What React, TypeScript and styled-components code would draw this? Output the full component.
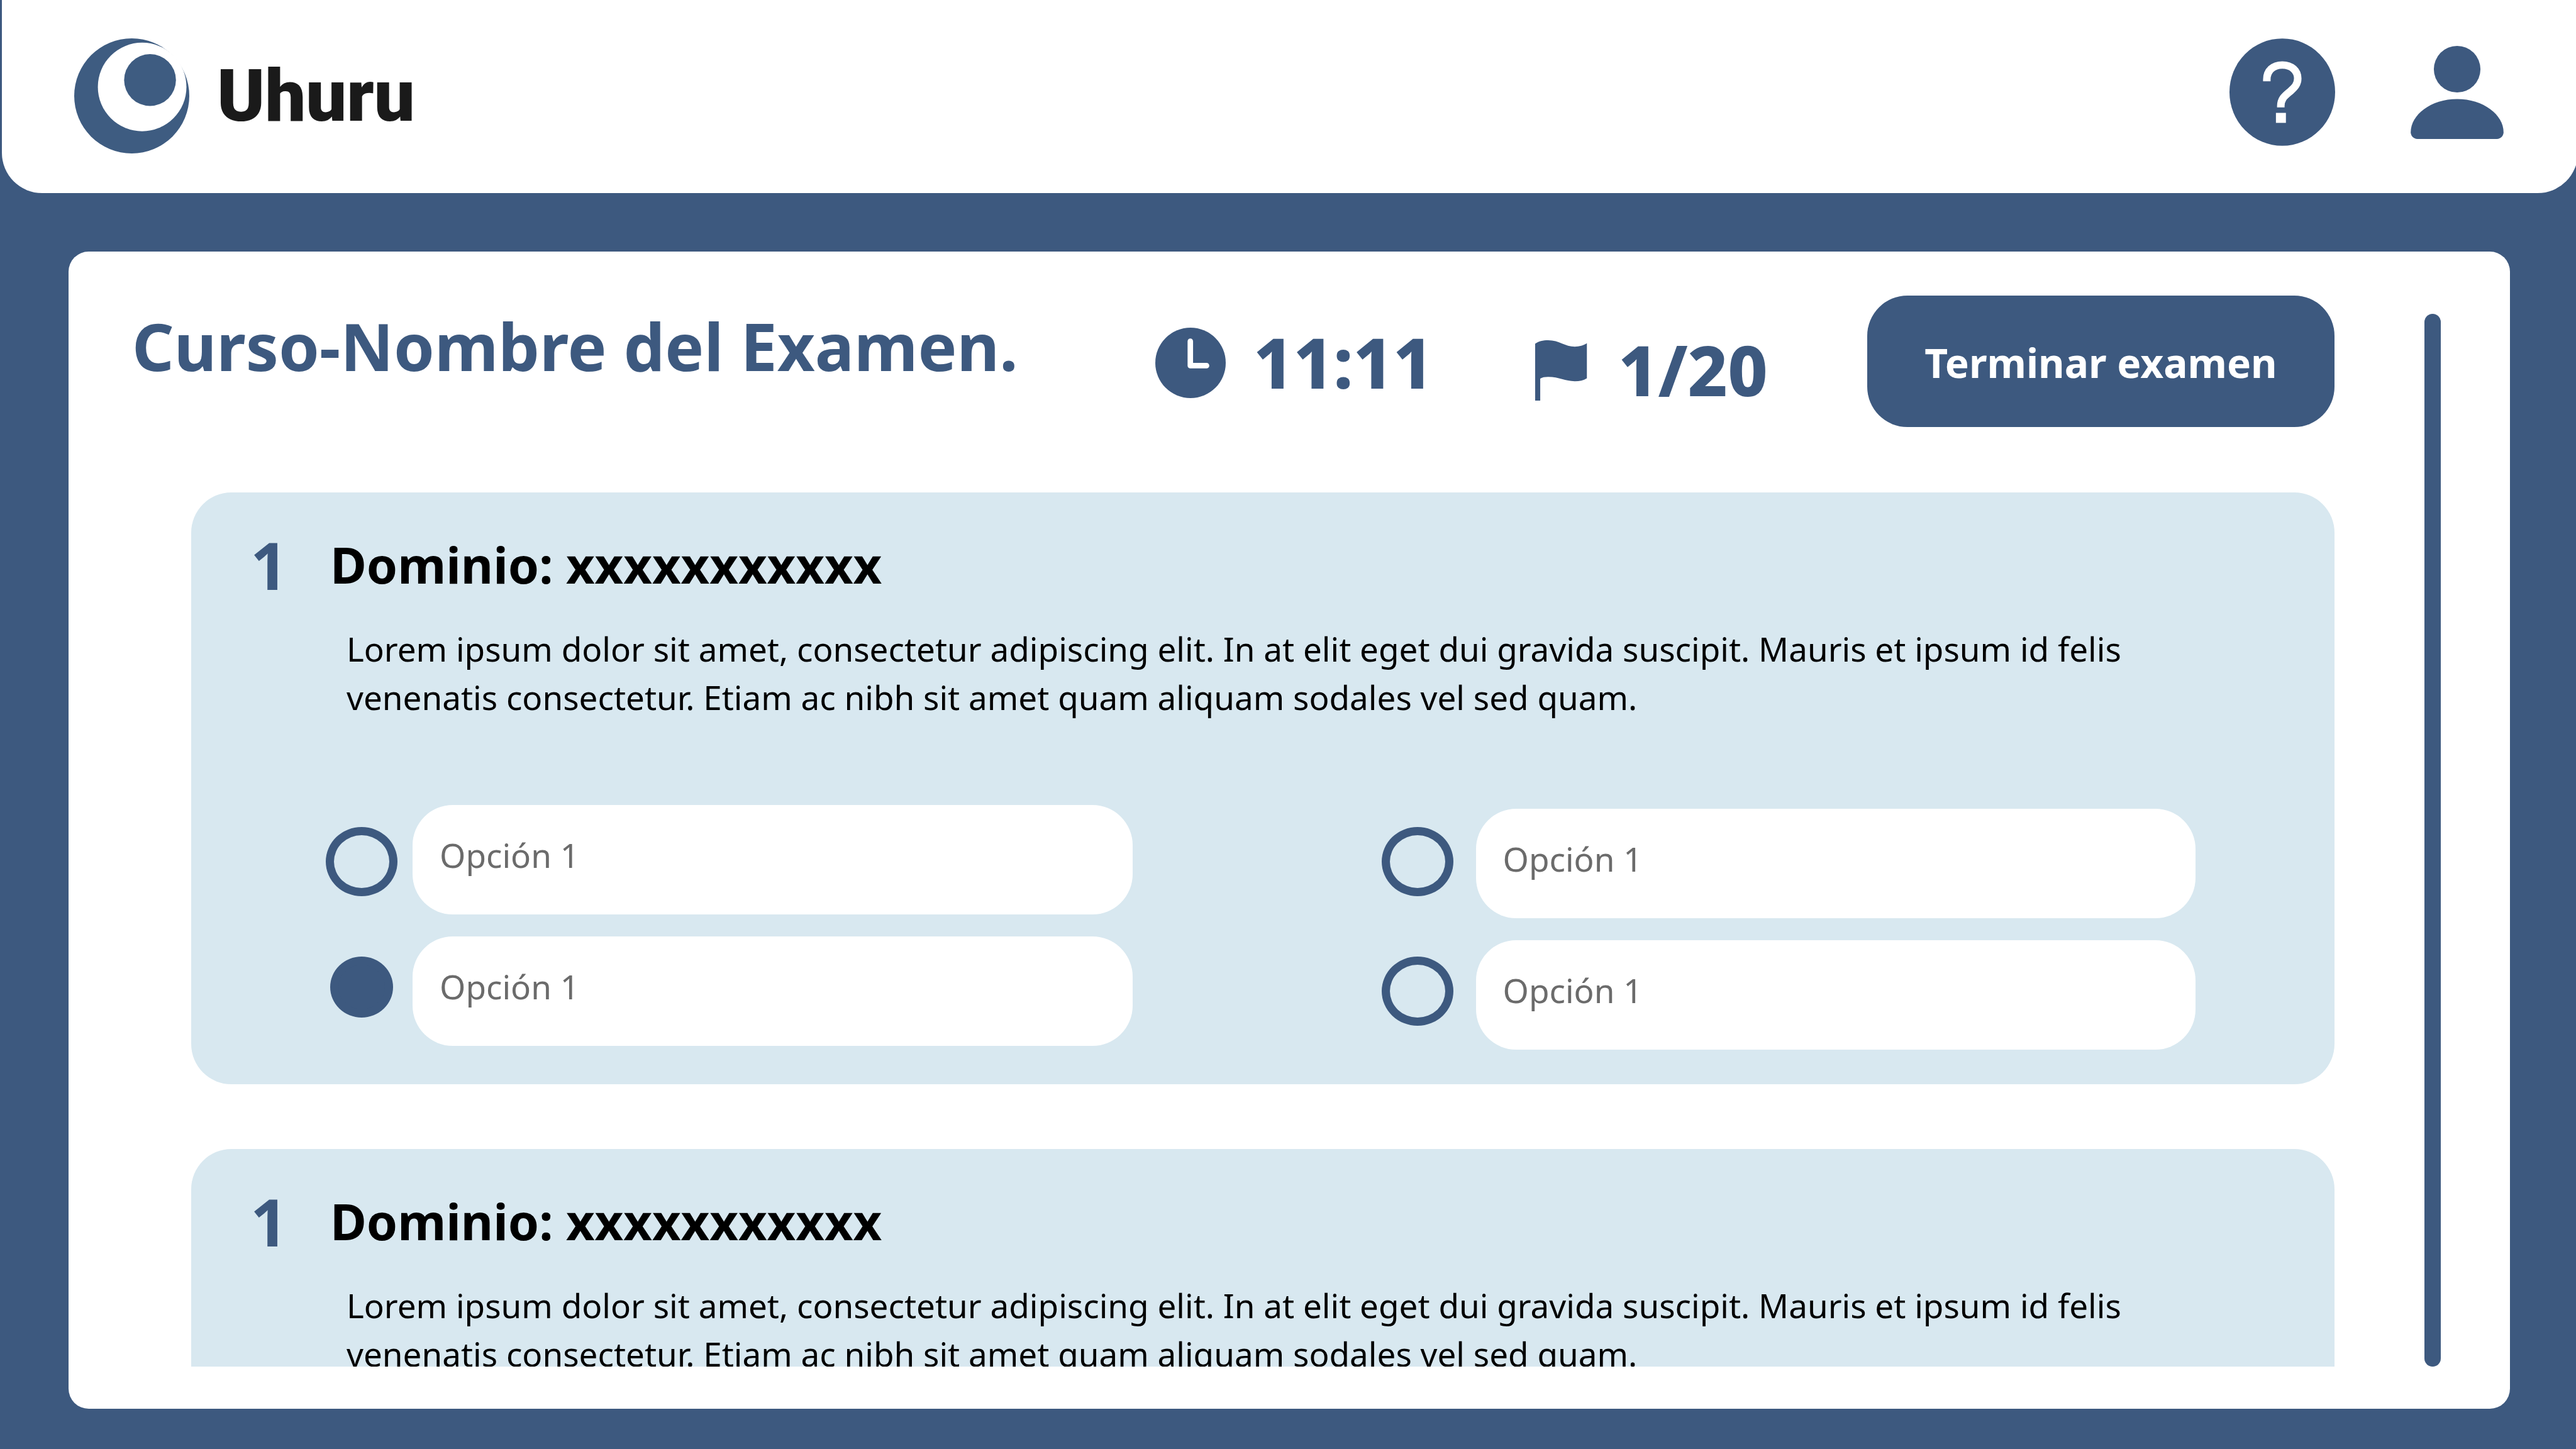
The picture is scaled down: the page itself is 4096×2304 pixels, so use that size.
import React from "react";
import styled, { createGlobalStyle } from "styled-components";

const BLUE = "#3d597f";
const LOGO_BLUE = "#3e5c81";
const PALE = "#d8e8f0";

const GlobalStyle = createGlobalStyle`
  *, *::before, *::after { box-sizing: border-box; }
  body {
    margin: 0;
    background: ${BLUE};
    color: #000;
    font-family: "Noto Sans", "Open Sans", sans-serif;
  }
  h1, h2, p { margin: 0; }
`;

const Page = styled.div`
  display: flex;
  flex-direction: column;
  height: 100vh;
  overflow: hidden;
  background: ${BLUE};
`;

const Header = styled.header`
  display: flex;
  justify-content: space-between;
  align-items: flex-start;
  flex: none;
  margin: 0 -3px 0 3px;
  padding: 61px 118px 63px 115px;
  background: #fff;
  border-radius: 0 0 64px 64px;
`;

const Brand = styled.a`
  display: flex;
  align-items: center;
  gap: 44px;
  color: #1a1a1a;
  font-family: Roboto, sans-serif;
  font-size: 115px;
  font-weight: 900;
  line-height: 183px;
  text-decoration: none;
`;

const HeaderActions = styled.nav`
  display: flex;
  align-items: center;
  gap: 120px;
`;

const IconButton = styled.button`
  display: flex;
  padding: 0;
  border: 0;
  background: none;
  cursor: pointer;
`;

const Icon = styled.svg<{ $color?: string }>`
  display: block;
  flex: none;
  fill: ${(p) => p.$color ?? BLUE};
`;

const Panel = styled.main`
  display: flex;
  flex: 1;
  gap: 143px;
  min-height: 0;
  margin: 93px 105px 64px 109px;
  padding: 70px 110px 67px 101px;
  background: #fff;
  border-radius: 32px;
`;

const Exam = styled.div`
  display: flex;
  flex: 1;
  flex-direction: column;
  gap: 104px;
  min-width: 0;
`;

const ExamBar = styled.div`
  display: grid;
  grid-template-columns: 1fr 604px 528px 743px;
  align-items: center;
`;

const Title = styled.h1`
  margin-bottom: 50px;
  color: ${BLUE};
  font-size: 104px;
  font-weight: 700;
  line-height: 104px;
  white-space: nowrap;
`;

const Stat = styled.div<{ $drop: number }>`
  display: flex;
  align-items: center;
  gap: 44px;
  margin-top: ${(p) => p.$drop}px;
`;

const StatValue = styled.span`
  padding-bottom: 4px;
  color: ${BLUE};
  font-size: 110px;
  font-weight: 800;
  line-height: 110px;
`;

const FinishButton = styled.button`
  height: 209px;
  padding: 4px 0 0;
  border: 0;
  border-radius: 64px;
  background: ${BLUE};
  color: #fff;
  font-family: inherit;
  font-size: 64px;
  font-weight: 700;
  white-space: nowrap;
  cursor: pointer;
`;

const QuestionList = styled.div`
  display: flex;
  flex: 1;
  flex-direction: column;
  gap: 103px;
  min-height: 0;
  margin-left: 94px;
  overflow-y: auto;
  scrollbar-width: none;
`;

const Card = styled.section`
  flex: none;
  padding: 63px 221px 55px 94px;
  border-radius: 64px;
  background: ${PALE};
`;

const CardHeading = styled.div`
  display: flex;
  align-items: center;
  line-height: 104px;
`;

const Number = styled.span`
  width: 127px;
  color: ${BLUE};
  font-size: 104px;
  font-weight: 700;
`;

const Domain = styled.h2`
  font-size: 79px;
  font-weight: 700;
`;

const Statement = styled.p`
  margin: 43px 0 133px 153px;
  font-size: 53px;
  line-height: 77px;
`;

const Answers = styled.div`
  display: flex;
  gap: 396px;
  margin-left: 120px;
`;

const AnswerColumn = styled.div<{ $gap: number }>`
  display: flex;
  flex: 1 1 auto;
  gap: ${(p) => p.$gap}px;
`;

const RadioStack = styled.div`
  display: flex;
  flex: none;
  flex-direction: column;
  align-items: center;
  gap: 96px;
  width: 114px;
  padding-top: 35px;
`;

const Radio = styled.input`
  appearance: none;
  width: 114px;
  height: 110px;
  margin: 0;
  border: 13px solid ${BLUE};
  border-radius: 50%;
  cursor: pointer;

  &:checked {
    width: 100px;
    height: 97px;
    background: ${BLUE};
  }
`;

const FieldStack = styled.div<{ $top: number }>`
  display: flex;
  flex: 1 1 auto;
  flex-direction: column;
  gap: 35px;
  padding-top: ${(p) => p.$top}px;
`;

const Field = styled.label`
  display: flex;
  align-items: center;
  height: 174px;
  padding: 0 43px 16px;
  border-radius: 64px;
  background: #fff;
  color: #6b6b6b;
  font-size: 53px;
  cursor: pointer;
`;

const ScrollBar = styled.div`
  flex: none;
  width: 26px;
  margin-top: 29px;
  border-radius: 13px;
  background: ${BLUE};
`;

function LogoIcon() {
  return (
    <Icon $color={LOGO_BLUE} width="183" height="183" viewBox="0 0 238 238" aria-hidden="true">
      <circle cx="119" cy="119" r="119" />
      <circle cx="140.5" cy="100.4" r="91.6" fill="#fff" />
      <circle cx="156.8" cy="86.2" r="53.6" />
    </Icon>
  );
}

function HelpIcon() {
  return (
    <Icon width="168" height="171" viewBox="0 0 219 222.4" aria-hidden="true">
      <ellipse cx="109.5" cy="111.2" rx="109.5" ry="111.2" />
      <path
        d="M77.4 88.8V85C77.4 67 90 55 109.5 55S141.5 67 141.5 83C141.5 95 135 101.5 127 108.5C115 119 106.4 124 106.4 140V142.7"
        fill="none"
        stroke="#fff"
        strokeWidth="15.6"
      />
      <rect x="96.3" y="154.2" width="20.7" height="20.7" fill="#fff" />
    </Icon>
  );
}

function UserIcon() {
  return (
    <Icon width="148" height="148" viewBox="0 0 192 192.5" aria-hidden="true">
      <circle cx="96" cy="48.2" r="48.2" />
      <path d="M0 178.6C0 142 42 109.8 96 109.8S192 142 192 178.6C192 186 186 192.5 178.2 192.5H13.8C6 192.5 0 186 0 178.6Z" />
    </Icon>
  );
}

function ClockIcon() {
  return (
    <Icon width="112" height="112" viewBox="0 0 146.4 146.4" aria-hidden="true">
      <circle cx="73.2" cy="73.2" r="73.2" />
      <path
        d="M72.8 28.3V79H106.5"
        fill="none"
        stroke="#fff"
        strokeWidth="11.4"
        strokeLinecap="round"
        strokeLinejoin="round"
      />
    </Icon>
  );
}

function FlagIcon() {
  return (
    <Icon width="88" height="96" viewBox="0 0 114.6 125" aria-hidden="true">
      <path d="M0 7.3C7 2 16 0 26.8 0C50 0 62 13.4 82 13.4C92 13.4 100 10.5 107.1 6.3V78.7C100 83 92 85 82 85C62 85 50 76 26.8 76C20 76 15 77 10.5 79.3V125H0Z" />
    </Icon>
  );
}

const STATEMENT =
  "Lorem ipsum dolor sit amet, consectetur adipiscing elit. In at elit eget dui gravida suscipit. Mauris et ipsum id felis venenatis consectetur. Etiam ac nibh sit amet quam aliquam sodales vel sed quam.";

const COLUMNS = [
  { side: "a", gap: 24, top: 0, options: ["Opción 1", "Opción 1"] },
  { side: "b", gap: 36, top: 6, options: ["Opción 1", "Opción 1"] },
];

function Question({ id }: { id: string }) {
  return (
    <Card>
      <CardHeading>
        <Number>1</Number>
        <Domain>Dominio: xxxxxxxxxxx</Domain>
      </CardHeading>
      <Statement>{STATEMENT}</Statement>
      <Answers>
        {COLUMNS.map((column) => (
          <AnswerColumn key={column.side} $gap={column.gap}>
            <RadioStack>
              {column.options.map((_, i) => (
                <Radio
                  key={i}
                  type="radio"
                  id={`${id}-${column.side}${i}`}
                  name={id}
                  defaultChecked={column.side === "a" && i === 1}
                />
              ))}
            </RadioStack>
            <FieldStack $top={column.top}>
              {column.options.map((option, i) => (
                <Field key={i} htmlFor={`${id}-${column.side}${i}`}>
                  {option}
                </Field>
              ))}
            </FieldStack>
          </AnswerColumn>
        ))}
      </Answers>
    </Card>
  );
}

export default function App() {
  return (
    <>
      <GlobalStyle />
      <Page>
        <Header>
          <Brand href="#">
            <LogoIcon />
            Uhuru
          </Brand>
          <HeaderActions>
            <IconButton type="button" aria-label="Ayuda">
              <HelpIcon />
            </IconButton>
            <IconButton type="button" aria-label="Perfil">
              <UserIcon />
            </IconButton>
          </HeaderActions>
        </Header>
        <Panel>
          <Exam>
            <ExamBar>
              <Title>Curso-Nombre del Examen.</Title>
              <Stat $drop={4}>
                <ClockIcon />
                <StatValue>11:11</StatValue>
              </Stat>
              <Stat $drop={28}>
                <FlagIcon />
                <StatValue>1/20</StatValue>
              </Stat>
              <FinishButton type="button">Terminar examen</FinishButton>
            </ExamBar>
            <QuestionList>
              <Question id="q1" />
              <Question id="q2" />
            </QuestionList>
          </Exam>
          <ScrollBar />
        </Panel>
      </Page>
    </>
  );
}
